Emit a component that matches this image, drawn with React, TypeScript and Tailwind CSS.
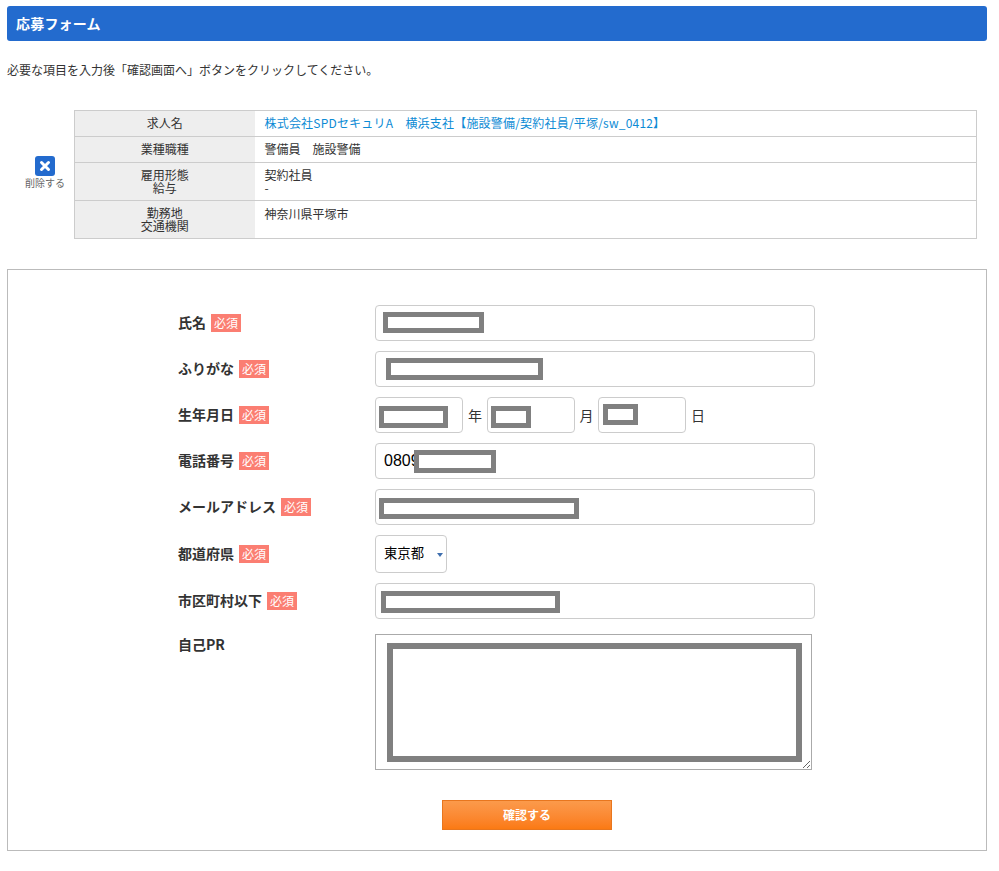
import React from "react";

function Redact({ className }: { className: string }) {
  return <div className={"absolute border-[5px] border-[#808080] bg-white " + className} />;
}

function Label({ text, required = true }: { text: string; required?: boolean }) {
  return (
    <div className="w-[197px] shrink-0 flex items-center gap-[5px] text-[14px] font-bold text-[#333]">
      <span className="pb-[2px]">{text}</span>
      {required && (
        <span className="bg-[#fb7e72] text-white text-[12px] font-normal w-[30px] h-[18px] leading-[18px] text-center">必須</span>
      )}
    </div>
  );
}

function TextBox({ className = "w-[440px]", value = "", children }: { className?: string; value?: string; children?: React.ReactNode }) {
  return (
    <div className={"relative h-[36px] " + className}>
      <input
        readOnly
        value={value}
        className="w-full h-full border border-[#ccc] rounded-[4px] px-[8px] text-[16px] font-['Liberation_Sans',sans-serif] text-black bg-white outline-none"
      />
      {children}
    </div>
  );
}

const thClass = "bg-[#eee] border-y border-l border-[#ccc] font-normal leading-[13px] text-center pb-[2px]";
const tdClass = "border-y border-r border-[#ccc] pl-[10px] leading-[13px] pb-[2px]";

export default function App() {
  return (
    <div className="bg-white min-h-[871px] pt-[6px] px-[7px] text-[12px] text-[#333] font-['Noto_Sans_CJK_JP','Liberation_Sans',sans-serif]">
      <h1 className="w-[980px] h-[35px] bg-[#236bce] rounded-[3px] text-white text-[14px] font-bold leading-[35px] pl-[9px] tracking-[0.2px]">応募フォーム</h1>
      <p className="mt-[21px] leading-[16px] h-[16px]">必要な項目を入力後「確認画面へ」ボタンをクリックしてください。</p>

      <div className="mt-[32px] flex items-center w-[970px]">
        <div className="w-[67px] shrink-0 flex flex-col items-center pl-[9px] pb-[3px]">
          <div className="w-[20px] h-[20px] rounded-[3px] bg-[#236bce] flex items-center justify-center">
            <svg width="12" height="12" viewBox="0 0 12 12">
              <path d="M2.5 2.5 L9.5 9.5 M9.5 2.5 L2.5 9.5" stroke="#fff" strokeWidth="3" strokeLinecap="round" />
            </svg>
          </div>
          <span className="text-[10px] leading-[14px] text-[#666]">削除する</span>
        </div>
        <table className="w-[903px] border-collapse table-fixed border border-[#ccc]">
          <colgroup>
            <col className="w-[180px]" />
            <col />
          </colgroup>
          <tbody>
            <tr className="h-[26px]">
              <th className={thClass}>求人名</th>
              <td className={tdClass}>
                <span className="text-[#0d8bd5] tracking-[0.2px]">株式会社SPDセキュリA　横浜支社【施設警備/契約社員/平塚/sw_0412】</span>
              </td>
            </tr>
            <tr className="h-[26px]">
              <th className={thClass}>業種職種</th>
              <td className={tdClass}>警備員　施設警備</td>
            </tr>
            <tr className="h-[38px]">
              <th className={thClass}>雇用形態<br />給与</th>
              <td className={tdClass}>契約社員<br />-</td>
            </tr>
            <tr className="h-[38px]">
              <th className={thClass}>勤務地<br />交通機関</th>
              <td className={tdClass + " pb-[12px] align-top pt-[6px]"}>神奈川県平塚市</td>
            </tr>
          </tbody>
        </table>
      </div>

      <div className="mt-[30px] w-[980px] h-[582px] border border-[#bbb] pt-[35px] pl-[170px]">
        <div className="flex flex-col gap-[10px]">
          <div className="flex h-[36px]">
            <Label text="氏名" />
            <TextBox><Redact className="left-[8px] top-[7px] w-[101px] h-[21px]" /></TextBox>
          </div>
          <div className="flex h-[36px]">
            <Label text="ふりがな" />
            <TextBox><Redact className="left-[11px] top-[7px] w-[157px] h-[22px]" /></TextBox>
          </div>
          <div className="flex h-[36px]">
            <Label text="生年月日" />
            <div className="flex items-center text-[14px]">
              <TextBox className="w-[88px]"><Redact className="left-[4px] top-[9px] w-[69px] h-[22px]" /></TextBox>
              <span className="w-[24px] text-center">年</span>
              <TextBox className="w-[88px]"><Redact className="left-[4px] top-[9px] w-[40px] h-[22px]" /></TextBox>
              <span className="w-[23px] text-center">月</span>
              <TextBox className="w-[88px]"><Redact className="left-[5px] top-[7px] w-[35px] h-[21px]" /></TextBox>
              <span className="w-[24px] text-center">日</span>
            </div>
          </div>
          <div className="flex h-[36px]">
            <Label text="電話番号" />
            <TextBox value="0809"><Redact className="left-[39px] top-[7px] w-[82px] h-[23px]" /></TextBox>
          </div>
          <div className="flex h-[36px]">
            <Label text="メールアドレス" />
            <TextBox><Redact className="left-[4px] top-[9px] w-[200px] h-[21px]" /></TextBox>
          </div>
          <div className="flex h-[38px]">
            <Label text="都道府県" />
            <div className="relative w-[72px] h-[38px] border border-[#ccc] rounded-[4px] bg-white flex items-center pl-[8px] pb-[2px] text-black text-[13.33px]">
              <span>東京都</span>
              <span className="absolute right-[3px] top-[17px] w-0 h-0 border-x-[3px] border-x-transparent border-t-[4px] border-t-[#3f6fae]" />
            </div>
          </div>
          <div className="flex h-[36px]">
            <Label text="市区町村以下" />
            <TextBox><Redact className="left-[6px] top-[8px] w-[179px] h-[22px]" /></TextBox>
          </div>
          <div className="flex h-[136px] mt-[5px]">
            <div className="w-[197px] shrink-0 text-[14px] font-bold leading-[20px]">自己PR</div>
            <div className="relative w-[437px] h-[136px]">
              <textarea readOnly className="block w-full h-full border border-[#aaa] bg-white outline-none" />
              <Redact className="left-[12px] top-[9px] w-[415px] h-[119px] border-[6px]" />
            </div>
          </div>
        </div>
        <div className="mt-[30px] pl-[264px]">
          <button className="block w-[170px] h-[30px] border border-[#e8761e] bg-gradient-to-b from-[#fb9a4b] to-[#fb7a12] text-white font-bold text-[12px]">確認する</button>
        </div>
      </div>
    </div>
  );
}
